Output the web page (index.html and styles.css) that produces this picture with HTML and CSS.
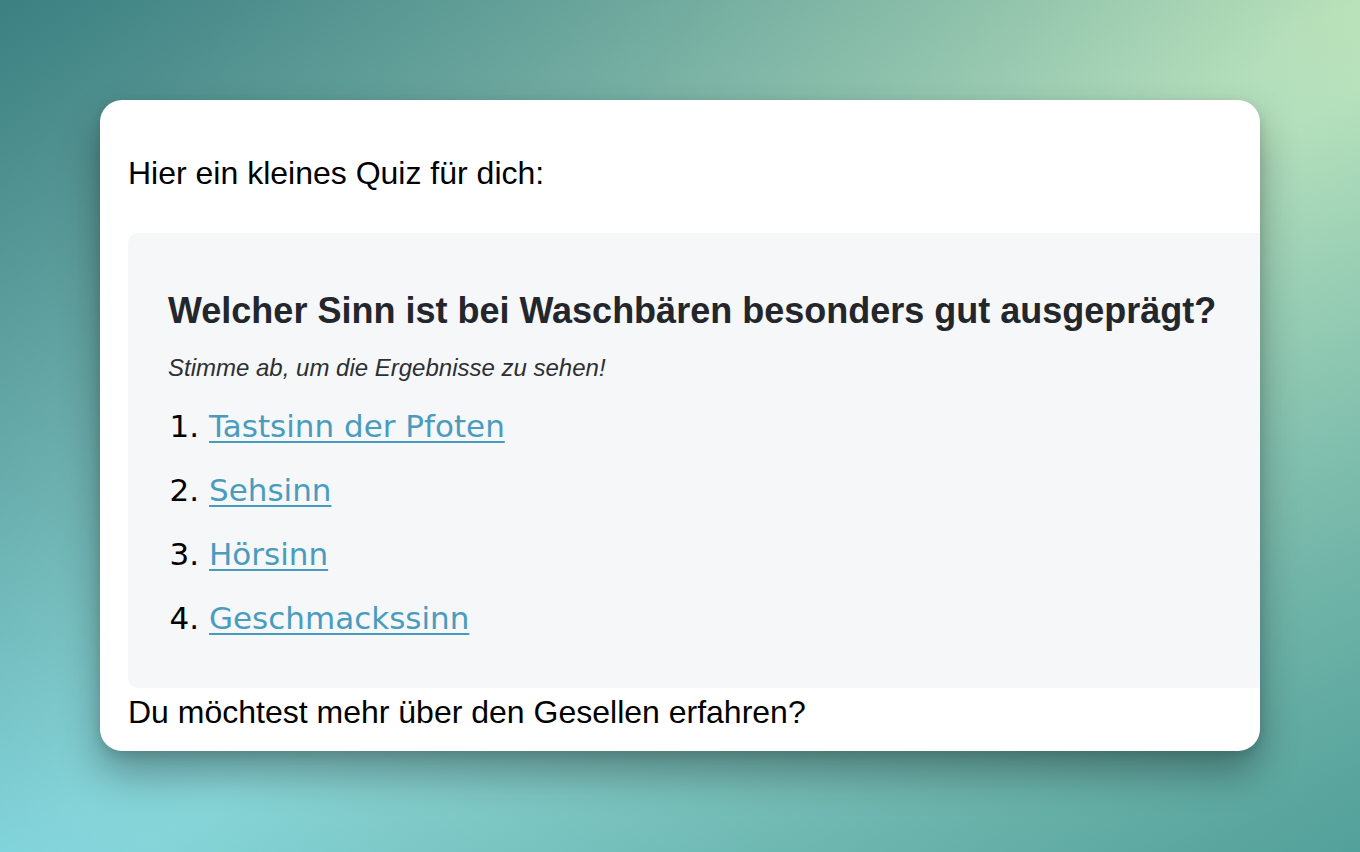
FILE: index.html
```html
<!DOCTYPE html>
<html lang="de">
<head>
<meta charset="utf-8">
<title>Quiz</title>
<link rel="stylesheet" href="styles.css">
</head>
<body>
<div class="card">
  <p class="intro">Hier ein kleines Quiz für dich:</p>
  <div class="quiz">
    <h2 class="quiz-title">Welcher Sinn ist bei Waschbären besonders gut ausgeprägt?</h2>
    <p class="quiz-hint">Stimme ab, um die Ergebnisse zu sehen!</p>
    <ol class="quiz-options">
      <li><a href="#">Tastsinn der Pfoten</a></li>
      <li><a href="#">Sehsinn</a></li>
      <li><a href="#">Hörsinn</a></li>
      <li><a href="#">Geschmackssinn</a></li>
    </ol>
  </div>
  <p class="outro">Du möchtest mehr über den Gesellen erfahren?</p>
</div>
</body>
</html>
```

FILE: styles.css
```css
html, body {
  margin: 0;
  height: 852px;
  overflow: hidden;
}

body {
  padding: 100px;
  box-sizing: border-box;
  font-family: "Liberation Sans", Arial, sans-serif;
  background:
    linear-gradient(to bottom right, rgba(60, 128, 130, 1) 0%, rgba(60, 128, 130, 0) 55%),
    linear-gradient(to top left, rgba(78, 158, 152, 0.95) 0%, rgba(78, 158, 152, 0) 50%),
    linear-gradient(to top right, #88dce4 0%, #9fd3c3 50%, #c6ebbf 100%);
}

.card {
  width: 1160px;
  box-sizing: border-box;
  background: #ffffff;
  border-radius: 22px;
  overflow: hidden;
  padding: 49px 28px 15px;
  box-shadow: 0 22px 40px rgba(0, 0, 0, 0.32), 0 4px 12px rgba(0, 0, 0, 0.12);
}

.intro,
.outro {
  margin: 0;
  font-size: 32px;
  line-height: 48px;
  color: #000;
}

.intro {
  margin-bottom: 36px;
}

.quiz {
  width: 1200px;
  box-sizing: border-box;
  background: #f6f7f9;
  border-radius: 10px;
  padding: 40px 40px 46px;
}

.quiz-title {
  margin: 16px 0 0;
  font-size: 36px;
  line-height: 43px;
  font-weight: bold;
  color: #23262b;
}

.quiz-hint {
  margin: 20px 0 0;
  font-size: 24px;
  line-height: 32px;
  font-style: italic;
  color: #2c2f33;
}

.quiz-options {
  margin: 18px 0 0;
  padding-left: 41px;
  font-family: "DejaVu Sans", Verdana, sans-serif;
  font-size: 31px;
  line-height: 48px;
  color: #000;
}

.quiz-options li {
  margin-bottom: 16px;
}

.quiz-options li:last-child {
  margin-bottom: 0;
}

.quiz-options a {
  color: #4a9cbf;
  text-decoration: underline;
  text-decoration-thickness: 2px;
  text-underline-offset: 4px;
}
```
